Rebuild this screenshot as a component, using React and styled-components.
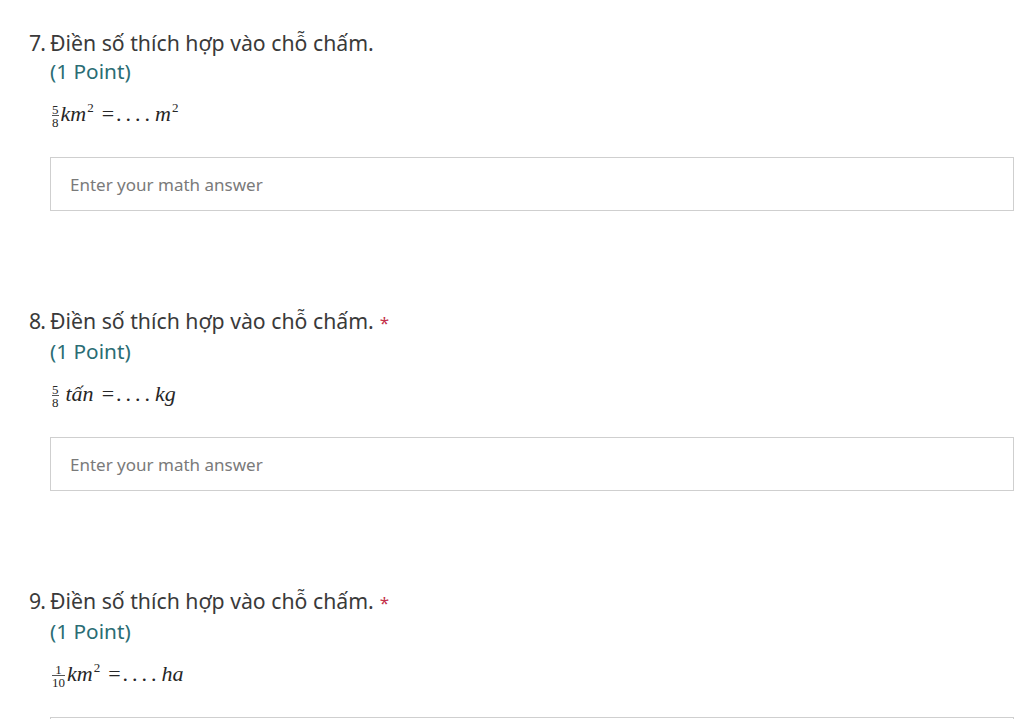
import styled, { createGlobalStyle } from "styled-components";

const Global = createGlobalStyle`
  body {
    margin: 0;
    background: #ffffff;
    font-family: "Noto Sans", "Open Sans", sans-serif;
  }
`;

const Page = styled.div`
  padding: 28px 10px 0 29px;
  display: flex;
  flex-direction: column;
  gap: 95px;
  height: 719px;
  overflow: hidden;
  box-sizing: border-box;
`;

const Question = styled.div`
  display: flex;
  flex-direction: column;
`;

const TitleRow = styled.div`
  display: flex;
  align-items: baseline;
  font-size: 21.25px;
  line-height: 29px;
  color: #3a3a3a;
`;

const Num = styled.span`
  width: 21px;
  flex: none;
  letter-spacing: -1px;
`;

const Star = styled.span`
  color: #c4314b;
  font-size: 17px;
  margin-left: 6px;
`;

const Body = styled.div`
  margin-left: 21px;
  display: flex;
  flex-direction: column;
`;

const Points = styled.div`
  font-size: 20.8px;
  line-height: 28px;
  color: #2b6d74;
`;

const MathLine = styled.div`
  margin-top: 14px;
  height: 30px;
  line-height: 30px;
  white-space: nowrap;
  font-family: "Liberation Serif", "Times New Roman", serif;
  font-style: italic;
  font-size: 22px;
  color: #262626;
`;

const Frac = styled.span`
  display: inline-flex;
  flex-direction: column;
  align-items: center;
  vertical-align: middle;
  font-style: normal;
  font-size: 13px;
  line-height: 11px;
  margin: 0 ${(p) => p.$gap || 2}px 0 2px;
  span + span {
    border-top: 1px solid #555;
    padding-top: 1px;
  }
`;

const Sup = styled.span`
  position: relative;
  top: -9px;
  font-style: normal;
  font-size: 13px;
  line-height: 0;
  margin-left: 1px;
`;

const Op = styled.span`
  font-style: normal;
  margin: 0 2px 0 8px;
`;

const Dots = styled.span`
  font-style: normal;
  letter-spacing: 4px;
  margin-right: 1px;
`;

const Answer = styled.div`
  margin-top: 28px;
  height: 54px;
  border: 1px solid #cfcfcf;
  box-sizing: border-box;
  display: flex;
  align-items: center;
  padding-left: 19px;
  font-size: 17px;
  color: #7a7a7a;
`;

const Fraction = ({ top, bottom, gap }) => (
  <Frac $gap={gap}>
    <span>{top}</span>
    <span>{bottom}</span>
  </Frac>
);

const questions = [
  {
    n: "7.",
    req: false,
    math: (
      <>
        <Fraction top="5" bottom="8" />
        km<Sup>2</Sup>
        <Op>=</Op>
        <Dots>....</Dots>m<Sup>2</Sup>
      </>
    ),
  },
  {
    n: "8.",
    req: true,
    math: (
      <>
        <Fraction top="5" bottom="8" gap={7} />
        tấn
        <Op>=</Op>
        <Dots>....</Dots>kg
      </>
    ),
  },
  {
    n: "9.",
    req: true,
    math: (
      <>
        <Fraction top="1" bottom="10" />
        km<Sup>2</Sup>
        <Op>=</Op>
        <Dots>....</Dots>ha
      </>
    ),
  },
];

export default function App() {
  return (
    <>
      <Global />
      <Page>
        {questions.map((q) => (
          <Question key={q.n}>
            <TitleRow>
              <Num>{q.n}</Num>
              <span>Điền số thích hợp vào chỗ chấm.</span>
              {q.req && <Star>*</Star>}
            </TitleRow>
            <Body>
              <Points>(1 Point)</Points>
              <MathLine>{q.math}</MathLine>
              <Answer>Enter your math answer</Answer>
            </Body>
          </Question>
        ))}
      </Page>
    </>
  );
}
